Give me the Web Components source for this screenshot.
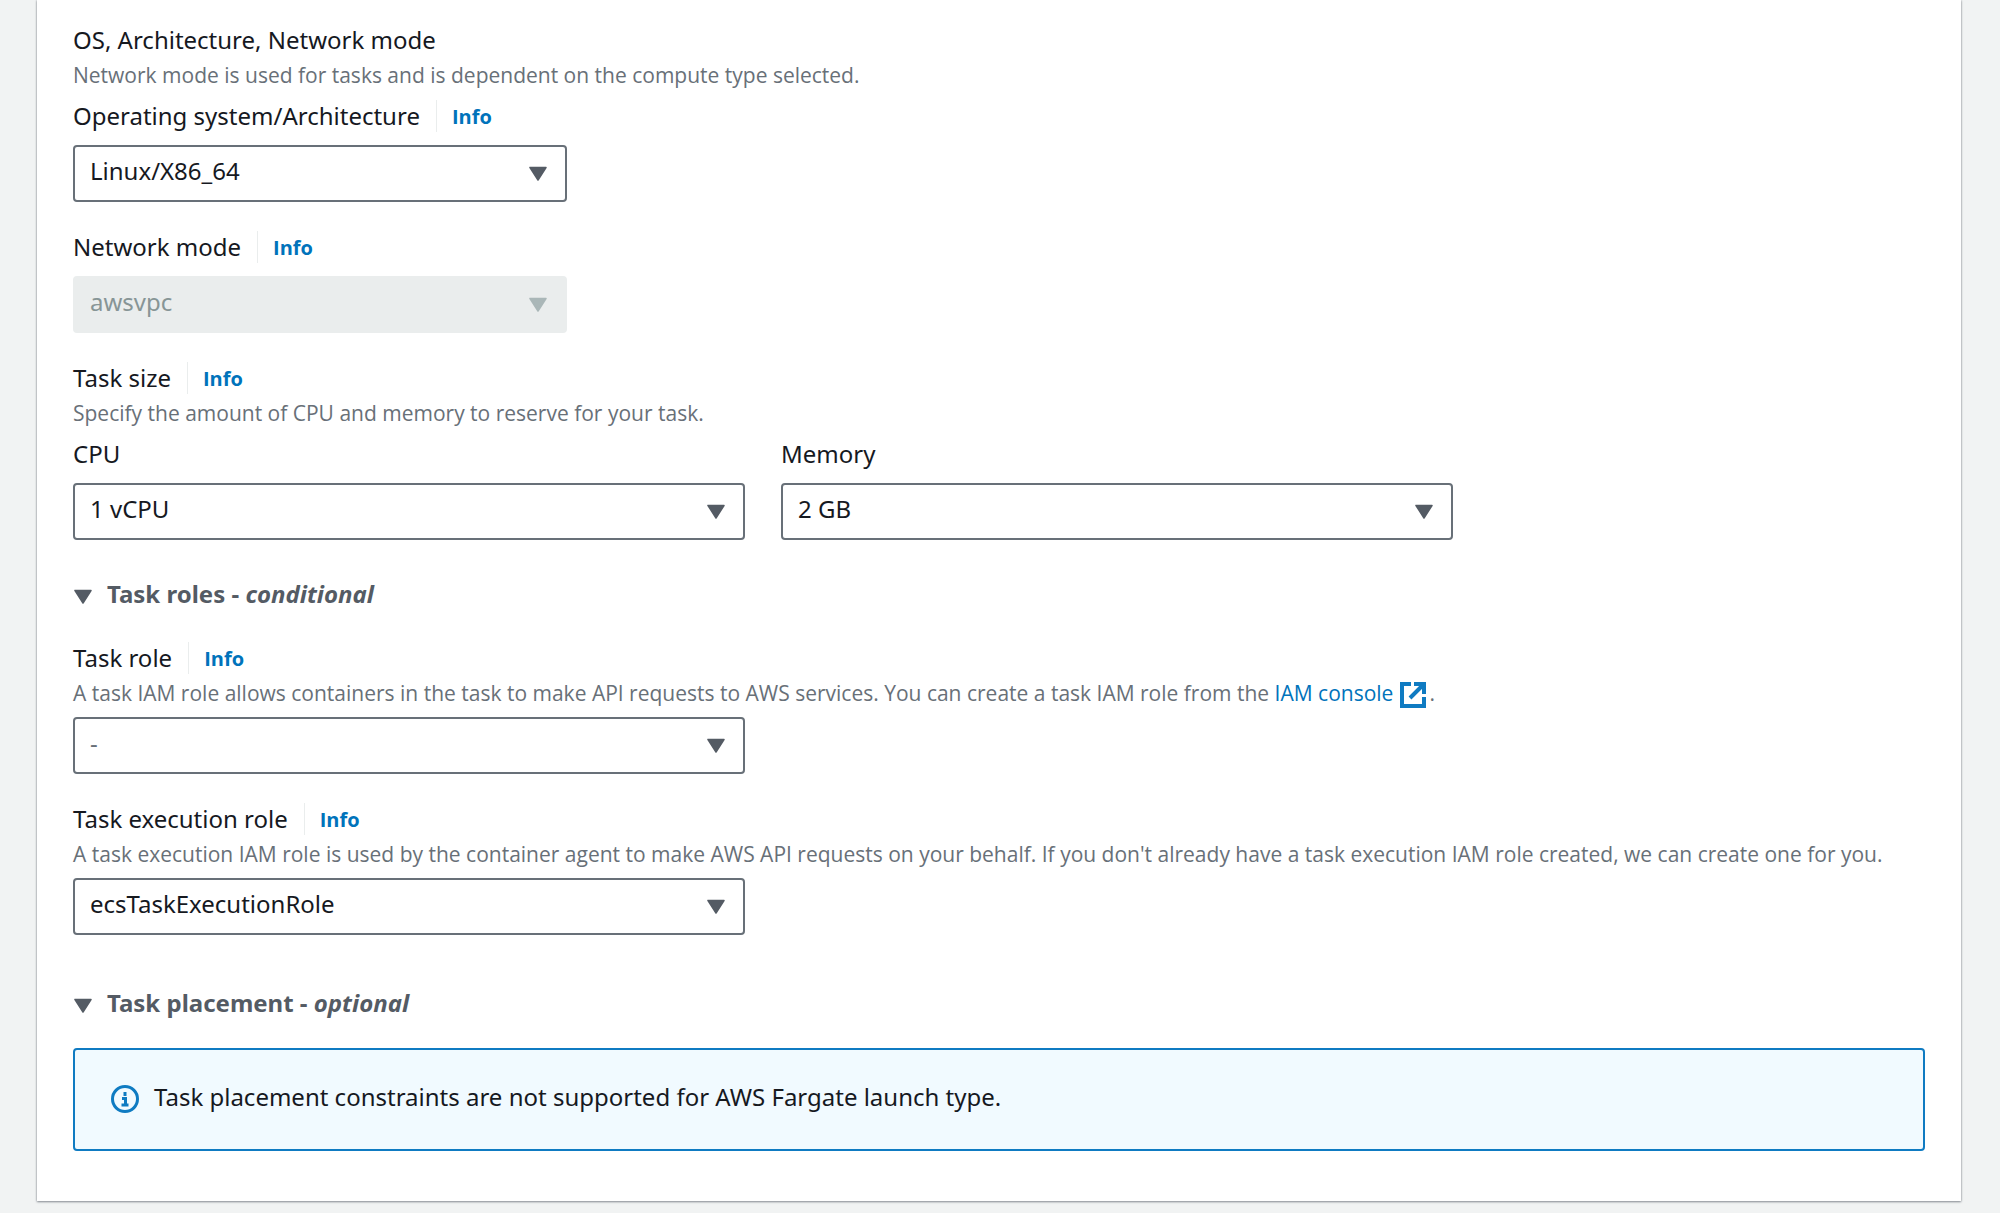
<!DOCTYPE html>
<html lang="en">
<head>
<meta charset="utf-8">
<meta name="viewport" content="width=device-width, initial-scale=1">
<title>Create task definition</title>
<style>
  body {
    margin: 0;
    min-height: 100vh;
    background: #f1f3f3;
    color: #16191f;
    font: 400 24px/40px "Noto Sans", "Open Sans", sans-serif;
  }
</style>
</head>
<body>
<task-page></task-page>

<template id="info-label-template">
  <style>
    :host { display: flex; align-items: center; gap: 16px; }
    .info { display: flex; align-items: center; box-sizing: border-box; height: 32px; padding: 2px 0 0 15px; border-left: 1px solid #eaeded; }
    a { color: #0073bb; font: 700 20px/30px "Open Sans", sans-serif; text-decoration: none; }
    a:hover { text-decoration: underline; }
  </style>
  <slot></slot>
  <span class="info"><a href="#info">Info</a></span>
</template>

<template id="field-note-template">
  <style>
    :host { display: block; padding-top: 1px; color: #687078; font: 400 21px/29px "Open Sans", sans-serif; }
  </style>
  <slot></slot>
</template>

<template id="external-link-template">
  <style>
    :host { display: inline; }
    a { color: #0073bb; text-decoration: none; }
    a:hover { text-decoration: underline; }
    svg { width: 26px; height: 26px; vertical-align: -7px; margin: 0 3px 0 7px; color: #0f7bc2; }
  </style>
  <a href="#iam"><slot></slot><svg viewBox="0 0 26 26" fill="none" stroke="currentColor" stroke-width="4" aria-hidden="true"><path d="M11 2H2v22h22v-9M14 2h10v10M23 3L10 16"/></svg></a></template>

<template id="select-field-template">
  <style>
    :host { display: block; min-width: 0; }
    .head { display: flex; }
    .control { display: grid; align-items: center; margin-top: 9px; }
    select, svg { grid-area: 1 / 1; }
    select {
      appearance: none;
      box-sizing: border-box;
      width: 100%;
      height: 57px;
      margin: 0;
      padding: 0 52px 5px 15px;
      border: 2px solid #687078;
      border-radius: 4px;
      background: #fff;
      color: #16191f;
      font: inherit;
    }
    select.empty { color: #687078; }
    select:disabled { border-color: #eaeded; background: #eaeded; color: #879596; opacity: 1; }
    svg { justify-self: end; width: 18px; height: 16px; margin-right: 20px; color: #545b64; pointer-events: none; }
    select:disabled + svg { color: #aab7b8; }
  </style>
  <div class="head"><label for="control"></label></div>
  <slot name="note"></slot>
  <div class="control">
    <select id="control"></select>
    <svg viewBox="0 0 18 16" aria-hidden="true"><path d="M1 1.500h16L9 14z" fill="currentColor" stroke="currentColor" stroke-width="1.500" stroke-linejoin="round"/></svg>
  </div>
</template>

<template id="section-toggle-template">
  <style>
    :host { display: block; }
    h3 { margin: 0; font: inherit; }
    button {
      display: flex; align-items: center; gap: 15px;
      padding: 0 0 0 1px; border: 0; background: none;
      color: #545b64; font: inherit; font-weight: 700; cursor: pointer;
    }
    svg { width: 18px; height: 16px; margin-top: 5px; }
  </style>
  <h3><button type="button" aria-expanded="true">
    <svg viewBox="0 0 18 16" aria-hidden="true"><path d="M1 1.500h16L9 14z" fill="currentColor" stroke="currentColor" stroke-width="1.500" stroke-linejoin="round"/></svg>
    <span><slot></slot></span>
  </button></h3>
</template>

<template id="info-alert-template">
  <style>
    :host {
      display: flex; align-items: center; gap: 15px;
      box-sizing: border-box; padding: 27px 36px 32px;
      border: 2px solid #0f7bc2; border-radius: 4px; background: #f1faff;
    }
    svg { flex: none; width: 28px; height: 28px; margin-top: 4px; color: #0f7bc2; }
  </style>
  <svg viewBox="0 0 28 28" fill="none" stroke="currentColor" aria-hidden="true"><circle cx="14" cy="14" r="12.500" stroke-width="3"/><path d="M14 7v4M11 13.500h3.500V20M10.500 20h7" stroke-width="3"/></svg>
  <span><slot></slot></span>
</template>

<template id="task-page-template">
  <style>
    :host { display: block; padding: 0 39px 12px 37px; }
    main {
      display: flow-root; padding: 20px 36px 50px; background: #fff;
      box-shadow: 0 1px 2px #545b6499, 0 0 2px #545b6466;
    }
    .group { margin-top: 25px; }
    .inner { margin-top: 6px; }
    .columns { display: grid; grid-template-columns: 1fr 1fr; gap: 36px; max-width: 1380px; }
    .short { max-width: 494px; }
    .roles { margin-top: 34px; }
    .role { margin-top: 24px; }
    .placement { margin-top: 48px; }
    h2 { margin: 0; font: inherit; }
  </style>
  <main>
    <h2>OS, Architecture, Network mode</h2>
    <field-note>Network mode is used for tasks and is dependent on the compute type selected.</field-note>
    <select-field class="inner short" label="Operating system/Architecture" value="Linux/X86_64" info></select-field>
    <select-field class="group short" label="Network mode" value="awsvpc" info disabled></select-field>
    <info-label class="group">Task size</info-label>
    <field-note>Specify the amount of CPU and memory to reserve for your task.</field-note>
    <div class="columns inner">
      <select-field label="CPU" value="1 vCPU"></select-field>
      <select-field label="Memory" value="2 GB"></select-field>
    </div>
    <section-toggle class="roles">Task roles - <em>conditional</em></section-toggle>
    <select-field class="role" label="Task role" value="-" info empty half>
      <field-note slot="note">A task IAM role allows containers in the task to make API requests to AWS services. You can create a task IAM role from the <external-link>IAM console</external-link>.</field-note>
    </select-field>
    <select-field class="group" label="Task execution role" value="ecsTaskExecutionRole" info half>
      <field-note slot="note">A task execution IAM role is used by the container agent to make AWS API requests on your behalf. If you don't already have a task execution IAM role created, we can create one for you.</field-note>
    </select-field>
    <section-toggle class="placement">Task placement - <em>optional</em></section-toggle>
    <info-alert class="group">Task placement constraints are not supported for AWS Fargate launch type.</info-alert>
  </main>
</template>

<script>
  class TemplateElement extends HTMLElement {
    constructor() {
      super();
      const template = document.getElementById(this.constructor.templateId);
      this.attachShadow({ mode: "open" }).append(template.content.cloneNode(true));
    }
  }

  class InfoLabel extends TemplateElement { static templateId = "info-label-template"; }
  class FieldNote extends TemplateElement { static templateId = "field-note-template"; }
  class ExternalLink extends TemplateElement { static templateId = "external-link-template"; }
  class SectionToggle extends TemplateElement { static templateId = "section-toggle-template"; }
  class InfoAlert extends TemplateElement { static templateId = "info-alert-template"; }
  class TaskPage extends TemplateElement { static templateId = "task-page-template"; }

  class SelectField extends TemplateElement {
    static templateId = "select-field-template";
    connectedCallback() {
      const root = this.shadowRoot;
      const label = root.querySelector("label");
      const select = root.querySelector("select");
      label.textContent = this.getAttribute("label");
      if (this.hasAttribute("info")) {
        const wrapper = document.createElement("info-label");
        label.replaceWith(wrapper);
        wrapper.append(label);
      }
      select.replaceChildren(new Option(this.getAttribute("value")));
      select.disabled = this.hasAttribute("disabled");
      select.classList.toggle("empty", this.hasAttribute("empty"));
      // Half-width controls line up with the two-column row above them.
      if (this.hasAttribute("half")) {
        root.querySelector(".control").style.width = "calc((min(100%, 1380px) - 36px) / 2)";
      }
    }
  }

  customElements.define("info-label", InfoLabel);
  customElements.define("field-note", FieldNote);
  customElements.define("external-link", ExternalLink);
  customElements.define("section-toggle", SectionToggle);
  customElements.define("info-alert", InfoAlert);
  customElements.define("select-field", SelectField);
  customElements.define("task-page", TaskPage);
</script>
</body>
</html>
